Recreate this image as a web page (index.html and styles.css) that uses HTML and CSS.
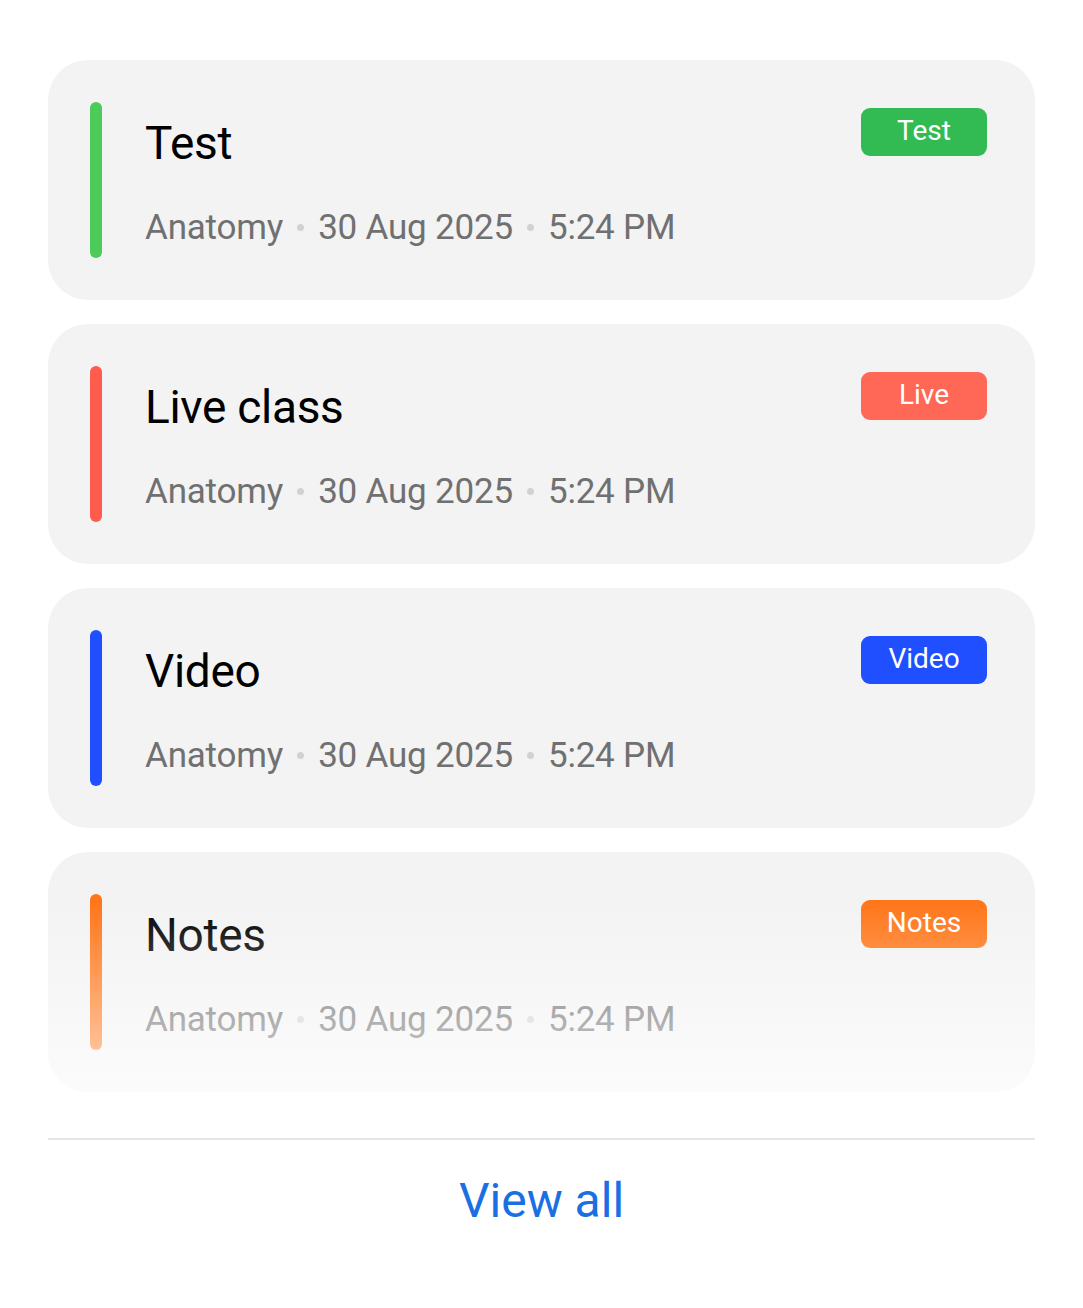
FILE: index.html
```html
<html lang="en">
  <head>
    <link rel="stylesheet" href="styles.css">
  </head>
  <body>
    <div class="feed">
      <div class="card test">
        <div class="bar"></div>
        <div class="info">
          <div class="title">Test</div>
          <div class="meta">Anatomy<span class="dot"></span>30 Aug 2025<span class="dot"></span>5:24 PM</div>
        </div>
        <div class="badge">Test</div>
      </div>
      <div class="card live">
        <div class="bar"></div>
        <div class="info">
          <div class="title">Live class</div>
          <div class="meta">Anatomy<span class="dot"></span>30 Aug 2025<span class="dot"></span>5:24 PM</div>
        </div>
        <div class="badge">Live</div>
      </div>
      <div class="card video">
        <div class="bar"></div>
        <div class="info">
          <div class="title">Video</div>
          <div class="meta">Anatomy<span class="dot"></span>30 Aug 2025<span class="dot"></span>5:24 PM</div>
        </div>
        <div class="badge">Video</div>
      </div>
      <div class="card notes faded">
        <div class="bar"></div>
        <div class="info">
          <div class="title">Notes</div>
          <div class="meta">Anatomy<span class="dot"></span>30 Aug 2025<span class="dot"></span>5:24 PM</div>
        </div>
        <div class="badge">Notes</div>
      </div>
      <div class="divider"></div>
      <a class="view-all" href="#">View all</a>
    </div>
  </body>
</html>
```
FILE: styles.css
```css
body, html {
  margin: 0;
  background: #fff;
  font-family: Roboto, 'Noto Sans', sans-serif;
  color: #000;
}
.feed {
  padding: 60px 48px 0;
  display: flex;
  flex-direction: column;
  gap: 24px;
}
.card {
  position: relative;
  height: 240px;
  box-sizing: border-box;
  padding: 42px 48px 42px 42px;
  background: #f3f3f3;
  border-radius: 40px;
  display: flex;
}
.faded::after {
  content: '';
  position: absolute;
  inset: 0;
  border-radius: inherit;
  background: linear-gradient(to bottom, rgba(255, 255, 255, 0) 20%, rgba(255, 255, 255, .7) 100%);
  pointer-events: none;
}
.bar {
  width: 12px;
  border-radius: 6px;
  flex-shrink: 0;
}
.info {
  flex: 1;
  margin-left: 43px;
  padding-top: 13px;
}
.title {
  font-size: 46px;
  line-height: 56px;
  letter-spacing: -.3px;
}
.meta {
  margin-top: 36px;
  font-size: 35px;
  line-height: 42px;
  letter-spacing: -.2px;
  color: #707070;
  white-space: nowrap;
}
.dot {
  display: inline-block;
  width: 7px;
  height: 7px;
  margin: 0 14px 4px;
  border-radius: 50%;
  background: #d2d2d2;
  vertical-align: middle;
}
.badge {
  align-self: flex-start;
  margin-top: 6px;
  width: 126px;
  height: 48px;
  border-radius: 9px;
  color: #fff;
  font-size: 28px;
  line-height: 46px;
  text-align: center;
}
.test .bar { background: #4dcb58; }
.test .badge { background: #33bb53; }
.live .bar { background: #ff5c4d; }
.live .badge { background: #ff6756; }
.video .bar { background: #1f4fff; }
.video .badge { background: #1f4fff; }
.notes .bar { background: #ff7518; }
.notes .badge { background: #ff7518; }
.divider {
  margin-top: 22px;
  height: 2px;
  background: #e6e6e6;
}
.view-all {
  margin-top: 9px;
  align-self: center;
  font-size: 48px;
  line-height: 56px;
  color: #1a6fe3;
  text-decoration: none;
}
```
